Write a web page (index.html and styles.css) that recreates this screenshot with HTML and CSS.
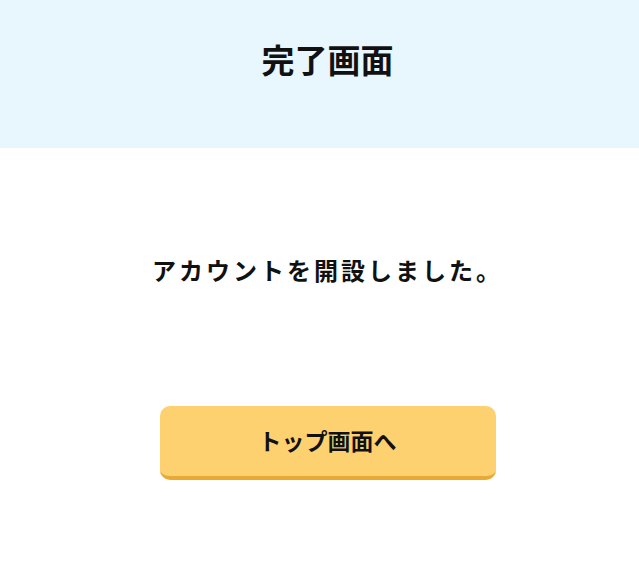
FILE: index.html
```html
<!DOCTYPE html>
<html lang="ja">
<head>
    <meta charset="UTF-8">
    <meta name="viewport" content="width=device-width, initial-scale=1.0">
    <title>完了画面</title>
    <link rel="stylesheet" href="styles.css">
</head>
<body>
    <!-- Header -->
    <header class="page-header">
        <h1>完了画面</h1>
    </header>
    <!-- Message -->
    <main class="content">
        <p class="message">アカウントを開設しました。</p>
        <button class="top-btn" type="button">トップ画面へ</button>
    </main>
</body>
</html>
```

FILE: styles.css
```css
body {
    font-family: "Noto Sans CJK JP", "Noto Sans", sans-serif;
    margin: 0;
    padding: 0;
    background-color: #ffffff;
    color: #111;
}
/* Header */
.page-header {
    background-color: #e8f6fe;
    height: 148px;
    display: flex;
    align-items: center;
    justify-content: center;
    padding-left: 16px;
}
.page-header h1 {
    font-size: 33px;
    font-weight: bold;
    margin: 0 0 30px;
}
/* Content */
.content {
    display: flex;
    flex-direction: column;
    align-items: center;
    padding-top: 104px;
    padding-left: 16px;
}
.message {
    font-size: 24px;
    font-weight: bold;
    letter-spacing: 3px;
    margin: 0 0 119px;
}
.top-btn {
    width: 336px;
    height: 74px;
    padding: 0 0 2px;
    background: #fdd070;
    border: none;
    border-bottom: 4px solid #e8aa35;
    border-radius: 10px;
    font-family: inherit;
    font-size: 23px;
    font-weight: bold;
    color: #111;
    cursor: pointer;
}
```
